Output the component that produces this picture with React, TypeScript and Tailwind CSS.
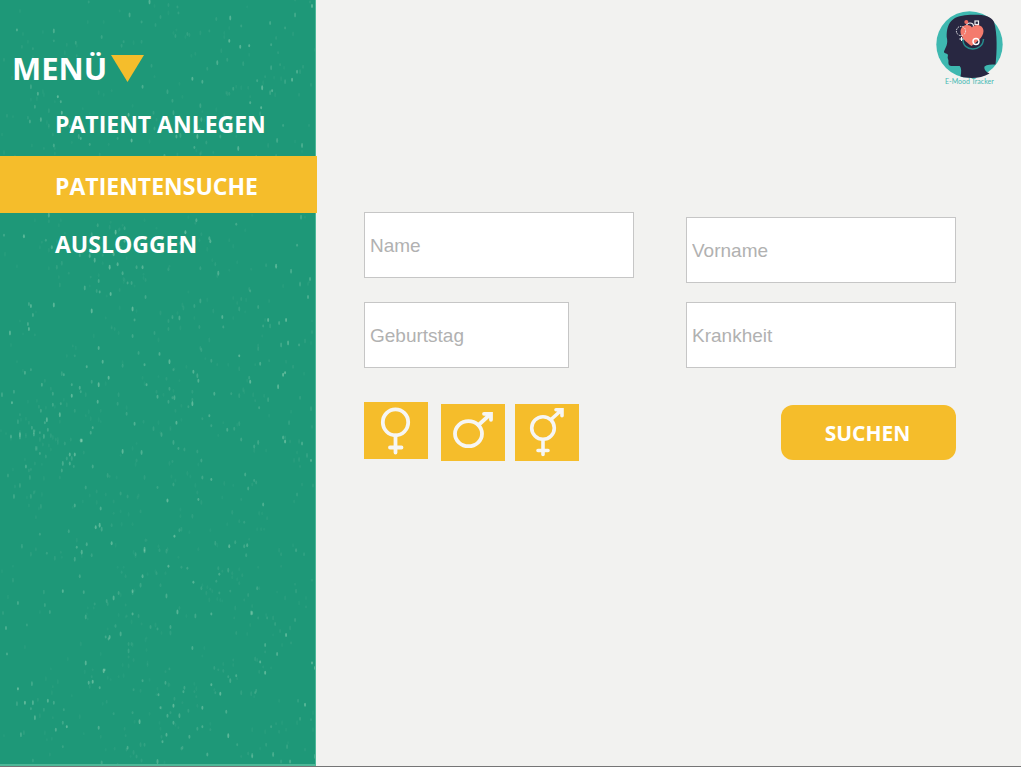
import React, { useMemo, useState } from "react";

type Speck = { x: number; y: number; h: number; o: number };

function makeSpecks(count: number): Speck[] {
  let seed = 20117;
  const next = () => {
    seed = (seed * 16807) % 2147483647;
    return seed / 2147483647;
  };
  const specks: Speck[] = [];
  let cx = 0;
  let cy = 0;
  for (let i = 0; i < count; i++) {
    if (i % 8 === 0) {
      cx = next() * 316;
      cy = next() * 768;
    }
    const loose = next() < 0.4;
    const x = loose ? next() * 316 : cx + (next() - 0.5) * 60;
    const y = loose ? next() * 768 : cy + (next() - 0.5) * 60;
    specks.push({
      x: Math.round(x),
      y: Math.round(y),
      h: 3 + Math.round(next() * 2),
      o: 0.04 + Math.pow(next(), 3) * 0.32,
    });
  }
  return specks;
}

function Texture() {
  const specks = useMemo(() => makeSpecks(1250), []);
  return (
    <svg
      className="absolute inset-0 h-full w-full"
      viewBox="0 0 316 767"
      preserveAspectRatio="xMidYMin slice"
      aria-hidden="true"
    >
      {specks.map((s, i) => (
        <ellipse key={i} cx={s.x} cy={s.y} rx={1} ry={s.h / 2} fill="#d5f5d9" opacity={s.o} />
      ))}
    </svg>
  );
}

function Logo() {
  return (
    <svg className="h-[77px] w-[68px]" viewBox="0 0 68 77" role="img" aria-label="E-Mood Tracker">
      <circle cx="34.5" cy="34.5" r="33.2" fill="#3eb8b0" />
      <path
        d="M11.7 27C11.5 20 13 13 18 9.5C23 5.5 31 5 38 4.8C48 4.5 56 6 59 12C62.5 23 62 42 60.5 54.5C56 54.5 52 54.5 49.5 56.500C48.700 59 51 62 54.5 63.500C46 68.5 35 69 25.5 66.5C26.5 62 26.500 58 24.700 56C20 55.5 14.5 57 13.7 54.5C13 52.5 14 50.5 13 49C12 47 13.5 46 12.7 44.5C12 43 8.5 43.5 9 41.5C10.5 37.5 13.5 34 11.7 27Z"
        fill="#282741"
      />
      <path d="M28 29C27 42 48 42.5 48.5 29" stroke="#268d8d" strokeWidth="1.5" fill="none" />
      <circle cx="35" cy="16.500" r="3.5" stroke="#f2f2f2" strokeWidth="1.2" fill="none" />
      <path
        d="M36.5 36C31 32 25.5 27 25.5 22C25.5 15 33.500 13 37 17.5C40 13 48.500 14.5 48.5 21C48.5 28 40.5 32.5 36.5 36Z"
        fill="#f47b6d"
      />
      <circle cx="31.3" cy="12" r="2" fill="#ee6e64" />
      <circle cx="26" cy="21" r="4.6" stroke="#eee" strokeWidth="1" strokeDasharray="1.5 1" fill="none" />
      <rect x="40" y="11" width="3.5" height="3.5" stroke="#eee" strokeWidth="1.2" fill="none" />
      <circle cx="41" cy="31.5" r="3" stroke="#fff" strokeWidth="1.4" fill="none" />
      <path d="M26.5 27v4M24.5 29h4" stroke="#fff" strokeWidth="1" />
      <text x="10" y="74" fill="#45b9b3" fontSize="7" fontFamily="Lato, sans-serif">
        E-Mood Tracker
      </text>
    </svg>
  );
}

const glyph = "h-[57px] w-16";

function Female() {
  return (
    <svg className={glyph} viewBox="0 0 64 57" fill="none" stroke="#f6f6f4" strokeWidth="3.8" strokeLinecap="round" aria-hidden="true">
      <ellipse cx="31.5" cy="20.3" rx="12.7" ry="13" />
      <path d="M31.5 33.5v17M26 45.5h11.5" />
    </svg>
  );
}

function Male() {
  return (
    <svg className={glyph} viewBox="0 0 64 57" fill="none" stroke="#f6f6f4" strokeWidth="3.8" strokeLinecap="round" aria-hidden="true">
      <ellipse cx="27.5" cy="29.7" rx="13.5" ry="12.5" />
      <path d="M37.5 21L49 10.5M43 9.8h7v6" />
    </svg>
  );
}

function Diverse() {
  return (
    <svg className={glyph} viewBox="0 0 64 57" fill="none" stroke="#f6f6f4" strokeWidth="3.6" strokeLinecap="round" aria-hidden="true">
      <circle cx="28" cy="24" r="11.3" />
      <path d="M36 15.5L46 6.5M41 5.7h6v6M28 36v14.5M23 46.5h10" />
    </svg>
  );
}

const menu = [
  { label: "PATIENT ANLEGEN", href: "#anlegen", style: "flex h-[63px] items-center pl-[55px]" },
  { label: "PATIENTENSUCHE", href: "#suche", style: "flex h-[57px] w-[317px] items-center bg-[#f5bd2b] pt-1 pl-[55px]" },
  { label: "AUSLOGGEN", href: "#ausloggen", style: "flex h-[63px] items-center pl-[55px]" },
];

const genders = [
  { label: "Weiblich", icon: <Female />, style: "mr-[13px] bg-[#f5bd2b]" },
  { label: "Männlich", icon: <Male />, style: "mt-0.5 mr-2.5 bg-[#f5bd2b]" },
  { label: "Divers", icon: <Diverse />, style: "mt-0.5 bg-[#f5bd2b]" },
];

function Field({ label, width }: { label: string; width: string }) {
  return (
    <input
      type="text"
      aria-label={label}
      placeholder={label}
      className={`${width} h-[66px] border border-[#c6c6c6] bg-white px-[5px] pt-0.5 font-['Liberation_Sans',sans-serif] text-[19px] text-gray-700 placeholder:text-[#b1b1b1]`}
    />
  );
}

export default function App() {
  const [gender, setGender] = useState<string | null>(null);
  return (
    <div className="flex min-h-screen border-b border-[#757575] bg-[#f2f2f0] font-['Open_Sans',sans-serif]">
      <aside className="relative w-[316px] shrink-0 border-r border-b-2 border-[#4eb898] bg-[#1e9878]">
        <Texture />
        <nav className="relative pt-11 text-[23px] font-bold text-white">
          <button type="button" className="flex h-[49px] items-center gap-1 pl-3 text-[31px] font-bold">
            MENÜ
            <svg className="h-[27px] w-[33px]" viewBox="0 0 33 27" aria-hidden="true">
              <path d="M0 0H33L16.5 27Z" fill="#f5bd2b" />
            </svg>
          </button>
          {menu.map((m) => (
            <a key={m.label} href={m.href} className={m.style}>
              {m.label}
            </a>
          ))}
        </nav>
      </aside>
      <main className="flex-1">
        <header className="flex justify-end pt-2.5 pr-[18px]">
          <Logo />
        </header>
        <form className="pt-[125px] pr-[65px] pl-12" onSubmit={(e) => e.preventDefault()}>
          <div className="grid grid-cols-2 gap-x-[52px]">
            <div className="flex flex-col gap-6">
              <Field label="Name" width="w-full" />
              <Field label="Geburtstag" width="w-[205px]" />
            </div>
            <div className="flex flex-col gap-[19px] pt-[5px]">
              <Field label="Vorname" width="w-full" />
              <Field label="Krankheit" width="w-full" />
            </div>
          </div>
          <div className="mt-[34px] flex items-start justify-between">
            <div className="flex items-start">
              {genders.map((g) => (
                <button
                  key={g.label}
                  type="button"
                  aria-label={g.label}
                  aria-pressed={gender === g.label}
                  onClick={() => setGender(g.label)}
                  className={g.style}
                >
                  {g.icon}
                </button>
              ))}
            </div>
            <button
              type="submit"
              className="mt-[3px] h-[55px] w-[175px] rounded-xl bg-[#f5bd2b] pt-0.5 pr-0.5 text-[21px] font-bold text-white"
            >
              SUCHEN
            </button>
          </div>
        </form>
      </main>
    </div>
  );
}
